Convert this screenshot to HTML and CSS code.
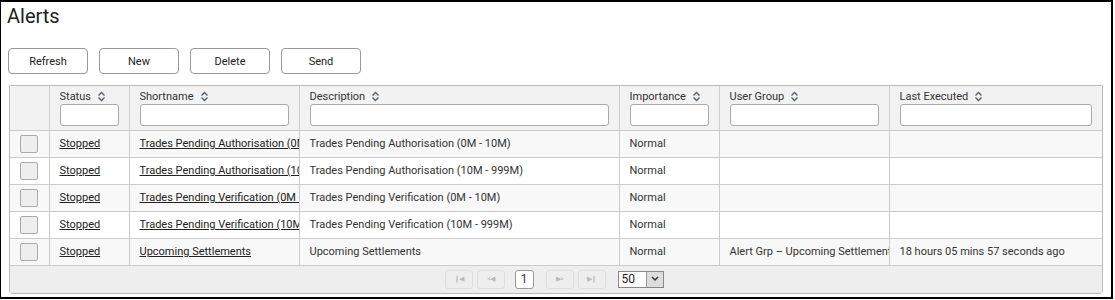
FILE: index.html
```html
<!DOCTYPE html>
<html lang="en">
<head>
  <meta charset="UTF-8">
  <title>Alerts</title>
  <link rel="stylesheet" href="styles.css">
</head>
<body>
  <div class="frame">
    <h1 class="page-title">Alerts</h1>
    <div class="toolbar">
      <button class="btn">Refresh</button>
      <button class="btn">New</button>
      <button class="btn">Delete</button>
      <button class="btn">Send</button>
    </div>
    <div class="grid">
      <table class="alerts">
        <colgroup>
          <col class="c-check">
          <col class="c-status">
          <col class="c-short">
          <col class="c-desc">
          <col class="c-imp">
          <col class="c-group">
          <col class="c-last">
        </colgroup>
        <thead>
          <tr>
            <th></th>
            <th><span class="th-label">Status <svg class="sort" viewBox="0 0 9 11"><path d="M1.5 4.5 L4.5 1.5 L7.5 4.5 M1.5 6.5 L4.5 9.5 L7.5 6.5"/></svg></span><input class="filter"></th>
            <th><span class="th-label">Shortname <svg class="sort" viewBox="0 0 9 11"><path d="M1.5 4.5 L4.5 1.5 L7.5 4.5 M1.5 6.5 L4.5 9.5 L7.5 6.5"/></svg></span><input class="filter"></th>
            <th><span class="th-label">Description <svg class="sort" viewBox="0 0 9 11"><path d="M1.5 4.5 L4.5 1.5 L7.5 4.5 M1.5 6.5 L4.5 9.5 L7.5 6.5"/></svg></span><input class="filter"></th>
            <th><span class="th-label">Importance <svg class="sort" viewBox="0 0 9 11"><path d="M1.5 4.5 L4.5 1.5 L7.5 4.5 M1.5 6.5 L4.5 9.5 L7.5 6.5"/></svg></span><input class="filter"></th>
            <th><span class="th-label">User Group <svg class="sort" viewBox="0 0 9 11"><path d="M1.5 4.5 L4.5 1.5 L7.5 4.5 M1.5 6.5 L4.5 9.5 L7.5 6.5"/></svg></span><input class="filter"></th>
            <th><span class="th-label">Last Executed <svg class="sort" viewBox="0 0 9 11"><path d="M1.5 4.5 L4.5 1.5 L7.5 4.5 M1.5 6.5 L4.5 9.5 L7.5 6.5"/></svg></span><input class="filter"></th>
          </tr>
        </thead>
        <tbody>
          <tr>
            <td><span class="check"></span></td>
            <td><a href="#">Stopped</a></td>
            <td><a href="#">Trades Pending Authorisation (0M - 10M)</a></td>
            <td>Trades Pending Authorisation (0M - 10M)</td>
            <td>Normal</td>
            <td></td>
            <td></td>
          </tr>
          <tr>
            <td><span class="check"></span></td>
            <td><a href="#">Stopped</a></td>
            <td><a href="#">Trades Pending Authorisation (10M - 999M)</a></td>
            <td>Trades Pending Authorisation (10M - 999M)</td>
            <td>Normal</td>
            <td></td>
            <td></td>
          </tr>
          <tr>
            <td><span class="check"></span></td>
            <td><a href="#">Stopped</a></td>
            <td><a href="#">Trades Pending Verification (0M - 10M)</a></td>
            <td>Trades Pending Verification (0M - 10M)</td>
            <td>Normal</td>
            <td></td>
            <td></td>
          </tr>
          <tr>
            <td><span class="check"></span></td>
            <td><a href="#">Stopped</a></td>
            <td><a href="#">Trades Pending Verification (10M - 999M)</a></td>
            <td>Trades Pending Verification (10M - 999M)</td>
            <td>Normal</td>
            <td></td>
            <td></td>
          </tr>
          <tr>
            <td><span class="check"></span></td>
            <td><a href="#">Stopped</a></td>
            <td><a href="#">Upcoming Settlements</a></td>
            <td>Upcoming Settlements</td>
            <td>Normal</td>
            <td>Alert Grp &ndash; Upcoming Settlements</td>
            <td>18 hours 05 mins 57 seconds ago</td>
          </tr>
        </tbody>
      </table>
      <div class="pager">
        <span class="pg-btn">&#x2759;&#x25C0;</span>
        <span class="pg-btn">&lt;&#x25C0;</span>
        <span class="pg-page">1</span>
        <span class="pg-btn">&#x25B6;&gt;</span>
        <span class="pg-btn">&#x25B6;&#x2759;</span>
        <span class="pg-size"><span class="pg-value">50</span><span class="pg-arrow"><svg viewBox="0 0 10 8"><path d="M2 2 L5 5 L8 2"/></svg></span></span>
      </div>
    </div>
  </div>
</body>
</html>
```

FILE: styles.css
```css
* {
  margin: 0;
  padding: 0;
  box-sizing: border-box;
}

body {
  font-family: 'Roboto', 'Liberation Sans', sans-serif;
  font-size: 11px;
  color: #333;
  background: #fff;
}

.frame {
  width: 1113px;
  height: 299px;
  border: 2px solid #000;
  border-left-width: 1px;
  padding: 0 0 0 8px;
}

.page-title {
  font-size: 20px;
  font-weight: normal;
  color: #222;
  line-height: 28px;
  margin-left: -2px;
}

.toolbar {
  display: flex;
  gap: 11px;
  margin-top: 18px;
  margin-left: -1px;
}

.btn {
  width: 80px;
  height: 26px;
  border: 1px solid #999;
  border-radius: 4px;
  background: #fff;
  font-family: inherit;
  font-size: 11px;
  color: #222;
}

.grid {
  width: 1094px;
  margin-top: 11px;
  border: 1px solid #bbb;
  border-radius: 0 0 3px 3px;
}

.alerts {
  width: 100%;
  border-collapse: collapse;
  table-layout: fixed;
}

.c-check { width: 39px; }
.c-status { width: 80px; }
.c-short { width: 170px; }
.c-desc { width: 320px; }
.c-imp { width: 100px; }
.c-group { width: 170px; }
.c-last { width: auto; }

.alerts th {
  background: #f2f2f2;
  font-weight: normal;
  text-align: left;
  vertical-align: top;
  height: 44px;
  padding: 3px 10px 0;
  border-left: 1px solid #ccc;
  border-bottom: 1px solid #ccc;
  color: #333;
}

.alerts th:first-child,
.alerts td:first-child {
  border-left: none;
}

.th-label {
  display: flex;
  align-items: center;
  gap: 6px;
  height: 14px;
}

.sort {
  width: 9px;
  height: 11px;
  fill: none;
  stroke: #4d6070;
  stroke-width: 1.3;
}

.filter {
  display: block;
  width: 100%;
  height: 22px;
  margin-top: 1px;
  border: 1px solid #aaa;
  border-radius: 3px;
  background: #fff;
}

.alerts td {
  height: 27px;
  padding: 0 10px;
  border-left: 1px solid #ccc;
  border-bottom: 1px solid #ccc;
  white-space: nowrap;
  overflow: hidden;
  color: #333;
}

.alerts tbody tr:nth-child(odd) td {
  background: #f8f8f8;
}

.alerts tbody tr:nth-child(even) td {
  background: #fff;
}

.alerts a {
  color: #222;
  text-decoration: underline;
}

.check {
  display: block;
  width: 18px;
  height: 18px;
  border: 1px solid #aaa;
  border-radius: 2px;
  background: #eee;
}

.pager {
  display: flex;
  align-items: center;
  justify-content: center;
  height: 27px;
  background: #eee;
  padding-right: 4px;
}

.pg-btn {
  display: flex;
  align-items: center;
  justify-content: center;
  width: 28px;
  height: 19px;
  margin-right: 4px;
  border: 1px solid #ddd;
  border-radius: 3px;
  font-size: 7px;
  color: #bbb;
  letter-spacing: -1px;
}

.pg-page {
  display: flex;
  align-items: center;
  justify-content: center;
  width: 19px;
  height: 19px;
  margin: 0 12px 0 6px;
  border: 1px solid #999;
  border-radius: 3px;
  background: #fff;
  font-size: 12px;
  color: #335;
}

.pg-btn:nth-child(5) {
  margin-right: 12px;
}

.pg-size {
  display: flex;
  height: 17px;
  width: 46px;
  border: 1px solid #888;
  background: #fff;
}

.pg-value {
  flex: 1;
  font-size: 12px;
  color: #222;
  line-height: 15px;
  padding-left: 3px;
}

.pg-arrow {
  width: 17px;
  background: #ddd;
  border-left: 1px solid #999;
  display: flex;
  align-items: center;
  justify-content: center;
}

.pg-arrow svg {
  width: 10px;
  height: 8px;
  fill: none;
  stroke: #333;
  stroke-width: 1.5;
}
```
